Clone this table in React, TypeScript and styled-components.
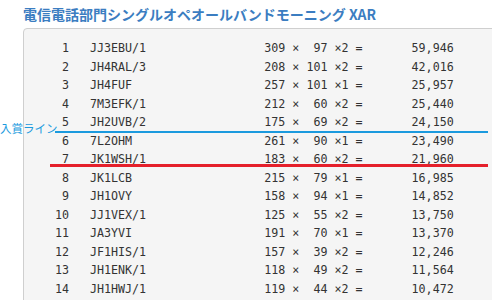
import styled, { createGlobalStyle } from "styled-components";

const GlobalStyle = createGlobalStyle`
  html, body {
    margin: 0;
    padding: 0;
    background: #fff;
    overflow: hidden;
  }
`;

type Entry = {
  rank: number;
  call: string;
  qso: number;
  mult: number;
  factor: number;
};

const entries: Entry[] = [
  { rank: 1, call: "JJ3EBU/1", qso: 309, mult: 97, factor: 2 },
  { rank: 2, call: "JH4RAL/3", qso: 208, mult: 101, factor: 2 },
  { rank: 3, call: "JH4FUF", qso: 257, mult: 101, factor: 1 },
  { rank: 4, call: "7M3EFK/1", qso: 212, mult: 60, factor: 2 },
  { rank: 5, call: "JH2UVB/2", qso: 175, mult: 69, factor: 2 },
  { rank: 6, call: "7L2OHM", qso: 261, mult: 90, factor: 1 },
  { rank: 7, call: "JK1WSH/1", qso: 183, mult: 60, factor: 2 },
  { rank: 8, call: "JK1LCB", qso: 215, mult: 79, factor: 1 },
  { rank: 9, call: "JH1OVY", qso: 158, mult: 94, factor: 1 },
  { rank: 10, call: "JJ1VEX/1", qso: 125, mult: 55, factor: 2 },
  { rank: 11, call: "JA3YVI", qso: 191, mult: 70, factor: 1 },
  { rank: 12, call: "JF1HIS/1", qso: 157, mult: 39, factor: 2 },
  { rank: 13, call: "JH1ENK/1", qso: 118, mult: 49, factor: 2 },
  { rank: 14, call: "JH1HWJ/1", qso: 119, mult: 44, factor: 2 },
];

const Page = styled.div`
  position: relative;
  width: 492px;
  height: 300px;
  overflow: hidden;
`;

const Title = styled.h2`
  margin: 0;
  padding: 4px 0 0 23px;
  height: 20px;
  line-height: 20px;
  font-family: "Noto Sans CJK JP", "Liberation Sans", sans-serif;
  font-size: 14px;
  font-weight: 700;
  color: #3b7dc1;
  white-space: nowrap;
`;

const Panel = styled.div`
  margin: 4px 0 0 23px;
  width: 520px;
  height: 300px;
  box-sizing: border-box;
  padding-top: 10px;
  border: 1px solid #cfcfcf;
  border-radius: 4px 0 0 0;
  background: #f5f5f5;
`;

const Row = styled.div`
  display: grid;
  grid-template-columns: 45px 195.3px 98.3px 91.1px;
  height: 18.54px;
  line-height: 18.54px;
  font-family: "DejaVu Sans Mono", "Liberation Mono", monospace;
  font-size: 11.66px;
  color: #333;
  white-space: pre;
`;

const Cell = styled.span<{ $align?: "left" | "right"; $indent?: number }>`
  text-align: ${(p) => p.$align ?? "left"};
  padding-left: ${(p) => p.$indent ?? 0}px;
`;

const PrizeLabel = styled.span`
  position: absolute;
  left: 0;
  top: 121px;
  line-height: 14px;
  font-family: "Noto Sans CJK JP", sans-serif;
  font-size: 11.5px;
  color: #1b9ade;
  white-space: nowrap;
`;

const Marker = styled.div<{ $color: string; $top: number; $left: number; $thick: number }>`
  position: absolute;
  left: ${(p) => p.$left}px;
  right: 4px;
  top: ${(p) => p.$top}px;
  height: ${(p) => p.$thick}px;
  background: ${(p) => p.$color};
`;

const fmt = (n: number) => n.toLocaleString("en-US");

export default function App() {
  return (
    <Page>
      <GlobalStyle />
      <Title>電信電話部門シングルオペオールバンドモーニング XAR</Title>
      <Panel>
        {entries.map((e) => (
          <Row key={e.rank}>
            <Cell $align="right">{e.rank}</Cell>
            <Cell $indent={21}>{e.call}</Cell>
            <Cell>{`${String(e.qso).padStart(3)} × ${String(e.mult).padStart(3)} ×${e.factor} =`}</Cell>
            <Cell $align="right">{fmt(e.qso * e.mult * e.factor)}</Cell>
          </Row>
        ))}
      </Panel>
      <PrizeLabel>入賞ライン</PrizeLabel>
      <Marker $color="#1b9ade" $top={130.5} $left={55} $thick={2} />
      <Marker $color="#e5202b" $top={163.5} $left={50} $thick={3.5} />
    </Page>
  );
}
